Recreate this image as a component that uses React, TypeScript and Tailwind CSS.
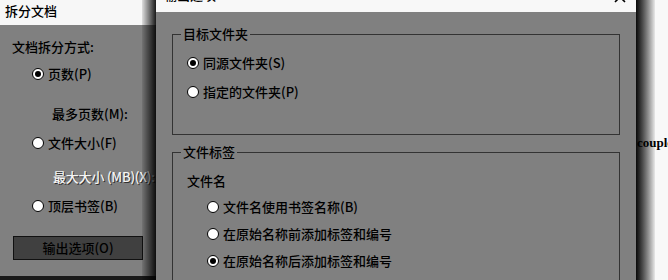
import React from 'react';

const font = { fontFamily: '"Noto Sans CJK SC", "Noto Sans", sans-serif' };

function Radio({ checked }: { checked?: boolean }) {
  return (
    <span className="w-[12px] h-[12px] rounded-full bg-white border-[1.5px] border-black flex items-center justify-center shrink-0">
      {checked && <span className="w-[6px] h-[6px] rounded-full bg-black" />}
    </span>
  );
}

function Option({ label, checked, className = '' }: { label: string; checked?: boolean; className?: string }) {
  return (
    <div className={`flex items-center gap-[4px] h-[16px] ${className}`}>
      <Radio checked={checked} />
      <span>{label}</span>
    </div>
  );
}

export default function App() {
  return (
    <div className="relative w-[668px] h-[280px] overflow-hidden bg-[#f8f8f8] text-[13px] leading-[16px] font-medium text-black" style={font}>
      {/* split dialog behind */}
      <div className="absolute left-0 top-0 w-[156px] h-[276px] flex flex-col">
        <div className="h-[25px] shrink-0 bg-[#f7f7f7] pl-[5px] pt-[3px]">拆分文档</div>
        <div className="flex-1 min-h-0 bg-[#808080] flex flex-col pt-[14px]">
          <div className="pl-[12px] h-[16px]">文档拆分方式:</div>
          <Option label="页数(P)" checked className="ml-[32px] mt-[11px]" />
          <div className="ml-[52px] mt-[24px] h-[16px]">最多页数(M):</div>
          <Option label="文件大小(F)" className="ml-[32px] mt-[13px]" />
          <div className="ml-[53px] mt-[18px] h-[16px] whitespace-nowrap tracking-[-0.2px] text-[#f4f4f4] [text-shadow:1px_1px_0_#303030]">最大大小 (MB)(X):</div>
          <Option label="顶层书签(B)" className="ml-[32px] mt-[13px]" />
          <div className="ml-[13px] mt-[22px] w-[130px] h-[24px] shrink-0 bg-[#404040] border border-[#111] flex items-center justify-center">
            输出选项(O)
          </div>
        </div>
      </div>
      <div className="absolute left-0 top-[276px] w-[156px] h-[4px] bg-[#1a1a1a]" />
      {/* shadow cast on the back dialog */}
      <div className="absolute left-[142px] top-0 w-[14px] h-[280px] bg-gradient-to-r from-black/10 to-black/90" />

      {/* output options dialog */}
      <div className="absolute left-[156px] top-0 w-[480px] h-[280px] flex flex-col">
        <div className="h-[12px] shrink-0 bg-[#f8f8f8] overflow-hidden relative">
          <div className="pl-[8px] -mt-[13px]">输出选项</div>
          <svg className="absolute left-[458px] -top-[9px]" width="12" height="12" viewBox="0 0 12 12">
            <path d="M1 1 L11 11 M11 1 L1 11" stroke="#000" strokeWidth="1.6" />
          </svg>
        </div>
        <div className="flex-1 min-h-0 overflow-hidden bg-[#808080] pl-[16px] pr-[16px] pt-[14px] flex flex-col">
          <fieldset className="border border-[#333] h-[109px] shrink-0 px-[14px]">
            <legend className="ml-[-6px] px-[2px]">目标文件夹</legend>
            <div className="flex flex-col gap-[12px] pt-[12px]">
              <Option label="同源文件夹(S)" checked className="h-[17px]" />
              <Option label="指定的文件夹(P)" className="h-[17px]" />
            </div>
          </fieldset>
          <fieldset className="border border-[#333] mt-[9px] h-[200px] shrink-0 px-[14px]">
            <legend className="ml-[-6px] px-[2px]">文件标签</legend>
            <div className="pt-[13px] h-[16px] box-content">文件名</div>
            <div className="flex flex-col gap-[11px] pl-[20px] mt-[10px]">
              <Option label="文件名使用书签名称(B)" />
              <Option label="在原始名称前添加标签和编号" />
              <Option label="在原始名称后添加标签和编号" checked />
            </div>
          </fieldset>
        </div>
      </div>

      {/* shadow to the right of the front dialog */}
      <div className="absolute left-[636px] top-0 w-[19px] h-[280px] bg-gradient-to-r from-[#0a0a0a] to-[#e8e8e8]" />
      <div className="absolute left-[637px] top-[135px] text-[13px] leading-[16px] font-bold whitespace-nowrap" style={{ fontFamily: '"Liberation Serif", serif' }}>
        couple
      </div>
    </div>
  );
}
